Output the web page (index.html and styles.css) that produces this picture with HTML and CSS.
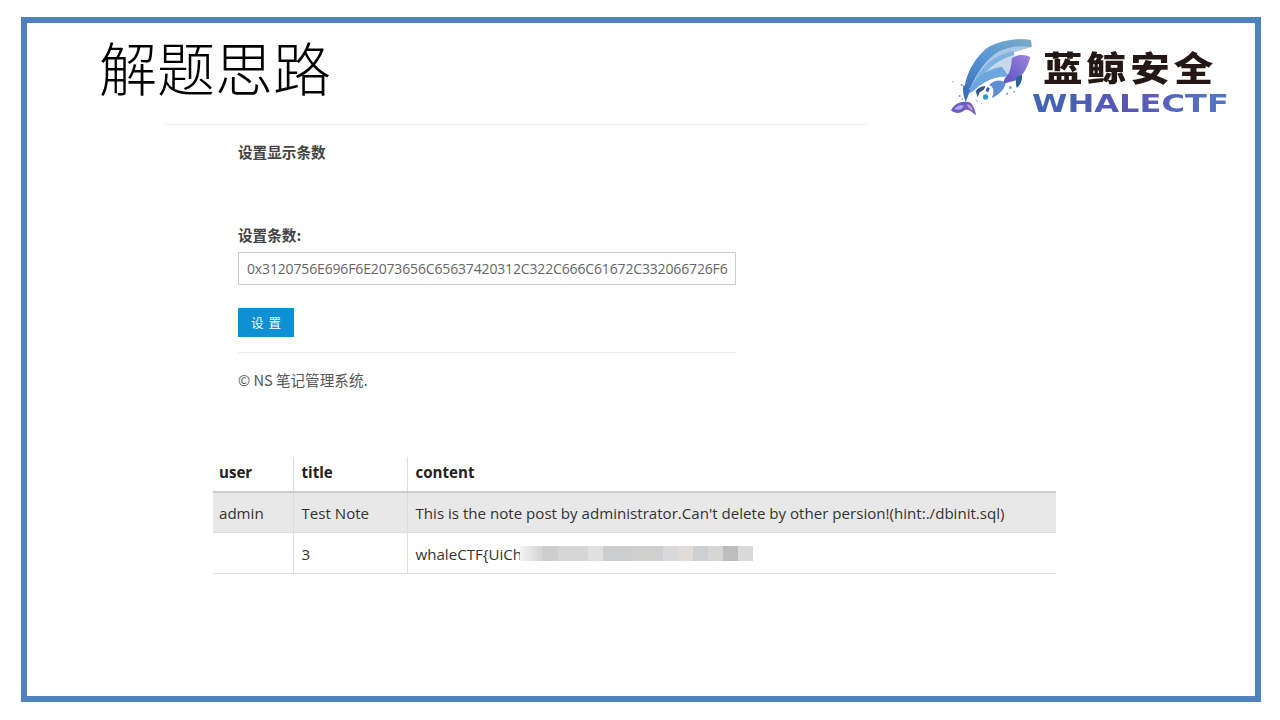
FILE: index.html
```html
<!DOCTYPE html>
<html lang="zh">
<head>
<meta charset="utf-8">
<title>解题思路</title>
<link rel="stylesheet" href="styles.css">
</head>
<body>
<main class="slide">
  <header class="head">
    <h1 class="title">解题思路</h1>
    <div class="logo">
      <svg class="whale" width="100" height="85" viewBox="0 0 300 255" aria-hidden="true">
        <defs>
          <linearGradient id="back" x1="0" y1="1" x2="1" y2="0">
            <stop offset="0" stop-color="#3e74c0"/>
            <stop offset=".5" stop-color="#5b98d6"/>
            <stop offset="1" stop-color="#7eabc4"/>
          </linearGradient>
          <linearGradient id="purple" x1="0" y1="1" x2="1" y2="0">
            <stop offset="0" stop-color="#5c50c0"/>
            <stop offset="1" stop-color="#9a86dc"/>
          </linearGradient>
        </defs>
        <path d="M58 165C62 120 85 75 125 40 160 18 215 8 258 15L260 36 207 52 205 112 192 124C160 124 125 132 92 162L70 176Z" fill="#a9c7e6"/>
        <path d="M58 165C62 120 85 75 125 40 160 18 215 8 258 15L260 36C225 30 190 35 160 50 120 75 95 115 75 160Z" fill="url(#back)"/>
        <path d="M85 150C100 105 140 62 205 48L208 62C160 75 125 100 105 138Z" fill="#7fb2e2"/>
        <path d="M105 138C125 98 165 72 207 60L204 112C190 128 170 124 150 112 135 115 118 124 105 138Z" fill="#c8d8ea"/>
        <path d="M68 172C88 128 125 102 170 95L192 124C160 124 125 132 92 162 84 170 76 176 68 172Z" fill="#6ea6de"/>
        <path d="M200 72C214 56 240 58 256 66 250 92 236 120 214 136L174 146 180 130C195 115 200 92 200 72Z" fill="url(#purple)"/>
        <path d="M215 125L231 120C233 135 226 150 215 159 212 146 212 135 215 125Z" fill="#2d6296"/>
        <path d="M132 150C150 131 175 134 182 146 176 166 160 180 140 189 150 170 146 156 132 150Z" fill="#5d8ed6"/>
        <path d="M92 168C100 158 112 152 122 154L116 164 104 172 98 186Z" fill="#33558c"/>
        <path d="M126 156L134 160 130 172 122 168Z" fill="#2f5f9a"/>
        <circle cx="122" cy="186" r="8" fill="#2f9cc6"/>
        <path d="M56 150C50 165 58 190 62 202L76 165Z" fill="#3f72b8"/>
        <path d="M18 226C28 206 50 198 62 201 76 198 88 210 93 241 80 231 72 222 60 225 45 238 30 236 18 226Z" fill="#6d5ec6"/>
        <path d="M28 222C36 212 48 208 56 212 54 220 42 228 28 222Z" fill="#b7a8ea"/>
        <path d="M66 208C74 208 82 218 84 228 76 224 68 218 66 208Z" fill="#d2a0c8"/>
        <g fill="#5f98cf">
          <circle cx="50" cy="150" r="3"/><circle cx="44" cy="183" r="3"/><circle cx="52" cy="192" r="2.5"/>
          <circle cx="24" cy="140" r="2"/><circle cx="186" cy="176" r="3"/><circle cx="196" cy="158" r="4"/>
          <circle cx="207" cy="170" r="2.5"/><circle cx="96" cy="198" r="2.5"/><circle cx="110" cy="205" r="2"/>
        </g>
      </svg>
      <div class="brand">
        <div class="brand-cn">蓝鲸安全</div>
        <div class="brand-en">WHALECTF</div>
      </div>
    </div>
  </header>

  <section class="shot">
    <div class="shot-rule"></div>
    <div class="panel">
      <h2 class="panel-title">设置显示条数</h2>
      <label class="field-label" for="num">设置条数:</label>
      <input class="field" id="num" type="text" readonly value="0x3120756E696F6E2073656C65637420312C322C666C61672C332066726F6D20666C6167">
      <button class="btn" type="button">设 置</button>
      <div class="panel-rule"></div>
      <p class="copy">© NS 笔记管理系统.</p>
    </div>
    <table class="notes">
      <colgroup><col class="c1"><col class="c2"><col class="c3"></colgroup>
      <thead>
        <tr><th>user</th><th>title</th><th>content</th></tr>
      </thead>
      <tbody>
        <tr class="odd"><td>admin</td><td>Test Note</td><td>This is the note post by administrator.Can't delete by other persion!(hint:./dbinit.sql)</td></tr>
        <tr><td></td><td>3</td><td><span class="flag">whaleCTF{UiCh<span class="mask"><i class="m0"></i><i class="m4"></i><i class="m2 wide"></i><i class="m3"></i><i class="m4 wide"></i><i class="m5 wide"></i><i class="m6"></i><i class="m7"></i><i class="m8"></i><i class="m2"></i><i class="m9"></i><i class="m6"></i></span></span></td></tr>
      </tbody>
    </table>
  </section>
</main>
</body>
</html>
```
FILE: styles.css
```css
* { box-sizing: border-box; }
html, body { margin: 0; height: 720px; background: #fff; overflow: hidden; }
body { padding: 17px 19px 18px 21px; font-family: "Open Sans", "Noto Sans CJK SC", sans-serif; }
.slide { height: 685px; border: 6px solid #4f81bd; background: #fff; }

.head { display: flex; justify-content: space-between; height: 96px; padding-left: 72px; padding-right: 28px; }
.title { margin: 14px 0 0; font: 300 58px/70px "Liberation Serif", "Noto Sans CJK SC", serif; color: #000; }
.logo { display: flex; align-items: flex-start; padding-top: 12px; }
.whale { flex: none; margin-right: -13px; filter: blur(.6px); }
.brand { width: 195px; padding-top: 13px; }
.brand-cn { margin-left: 11px; height: 38px; font: 900 34px/38px "Noto Sans CJK SC", sans-serif; letter-spacing: 3.6px; color: #231815; white-space: nowrap; transform: scaleX(1.16); transform-origin: left center; }
.brand-en { margin-top: 7px; height: 22px; font: 700 24.5px/22px "DejaVu Sans", sans-serif; white-space: nowrap; width: 150px; transform: scaleX(1.31); transform-origin: left center;
  background: linear-gradient(90deg, #3f67b4, #5a55b5 50%, #4f79c4); -webkit-background-clip: text; background-clip: text; color: transparent; }

.shot { padding-left: 138px; }
.shot-rule { width: 702px; height: 1px; margin-top: 5px; background: #eee; }
.panel { width: 498px; margin-left: 73px; color: #555; }
.panel-title { margin: 18px 0 0; font: 700 14.6px/18px "Noto Sans CJK SC", sans-serif; color: #444; }
.field-label { display: block; margin-top: 65px; font: 700 14.6px/18px "Noto Sans CJK SC", sans-serif; color: #444; }
.field { display: block; width: 100%; height: 33px; margin-top: 8px; padding: 0 7px 0 8px; border: 1px solid #ccc; outline: 0; background: #fff; font: 400 14px/20px "Open Sans", sans-serif; letter-spacing: -.15px; color: #666; }
.btn { display: block; width: 56px; height: 29px; margin-top: 23px; padding: 0 0 0 1px; border: 0; background: #0e90d2; color: #fff; font: 400 12.5px/30px "Noto Sans CJK SC", sans-serif; letter-spacing: 1px; }
.panel-rule { height: 1px; margin-top: 15px; background: #eee; }
.copy { margin: 17px 0 0; font: 400 14.6px/20px "Noto Sans CJK SC", "Open Sans", sans-serif; color: #555; }

.notes { width: 843px; margin: 67px 0 0 48px; border-collapse: collapse; table-layout: fixed; font-size: 15.1px; color: #333; }
.c1 { width: 80px; } .c2 { width: 114px; }
.notes th, .notes td { height: 41px; padding: 2px 7px 0 8px; text-align: left; border-left: 1px solid #ddd; border-bottom: 1px solid #ddd; white-space: nowrap; }
.notes th:first-child, .notes td:first-child { border-left: 0; padding-left: 6px; }
.notes th { height: 35px; padding-top: 0; padding-bottom: 4px; color: #222; font-weight: 700; border-bottom: 2px solid #ccc; }
.notes .odd td { height: 40px; background: #e8e8e8; }
.flag { display: inline-flex; align-items: center; }
.mask { display: inline-flex; height: 15px; margin-left: -2px; filter: blur(.5px); }
.mask i { display: block; width: 15px; height: 100%; }
.mask i.wide { width: 30px; }
.mask i.m0 { width: 23px; background: linear-gradient(90deg, #f4f4f4, #d3d3d3); }
.m2 { background: #d6d6d6; } .m3 { background: #e0e0de; } .m4 { background: #ccced0; }
.m5 { background: #cfcfcd; } .m6 { background: #d8dadc; } .m7 { background: #e0dcd8; }
.m8 { background: #cdd0d3; } .m9 { background: #bfbcbe; }
```
